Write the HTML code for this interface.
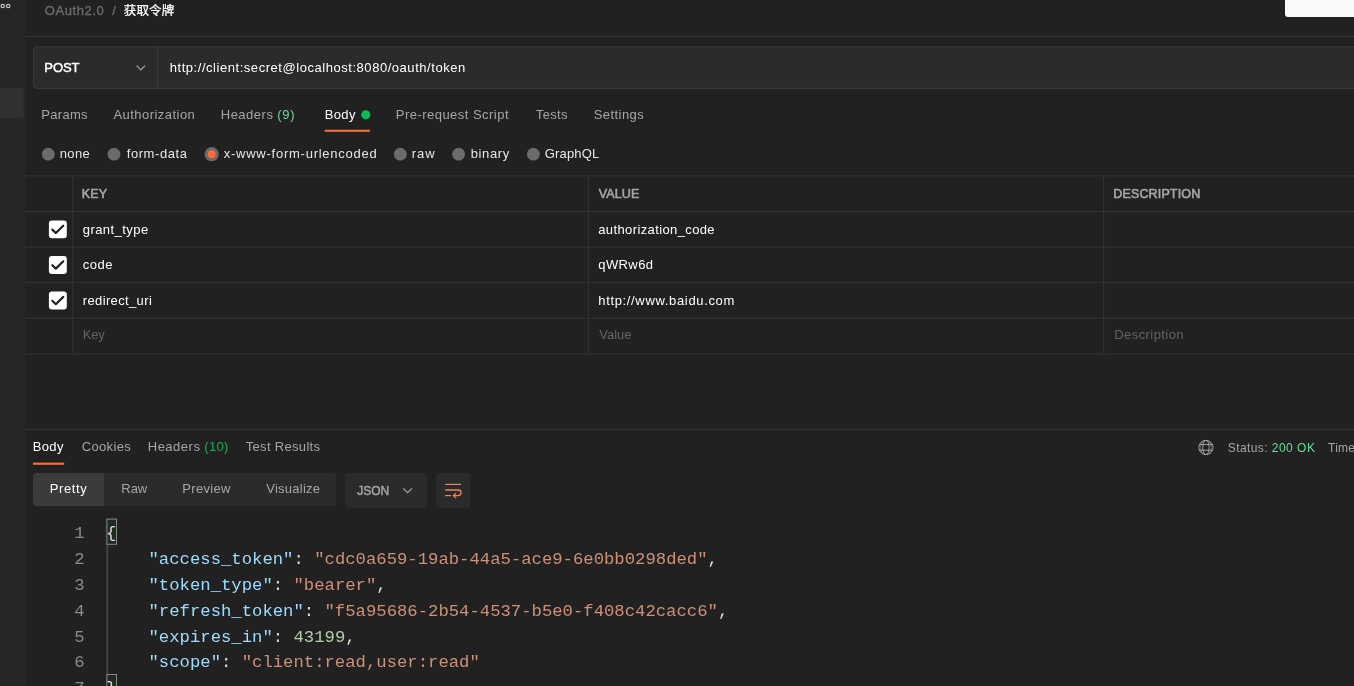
<!DOCTYPE html>
<html lang="zh"><head><meta charset="utf-8"><title>Postman - OAuth2.0</title><style>
*{margin:0;padding:0;box-sizing:border-box}
html,body{width:1354px;height:686px;overflow:hidden;background:#212121}
body{position:relative;font-family:"Liberation Sans", "Noto Sans CJK SC", sans-serif}
#app{position:absolute;left:0;top:0;width:1354px;height:686px;overflow:hidden;will-change:transform}
#bg{position:absolute;left:0;top:0}
.t{position:absolute;white-space:nowrap;height:20px;line-height:20px}
.code{position:absolute;white-space:pre;font-family:"Liberation Mono", monospace;font-size:17.25px;height:26px;line-height:26px}
.ln{position:absolute;width:40px;text-align:right;font-family:"Liberation Mono", monospace;font-size:17.25px;height:26px;line-height:26px;color:#8c8c84}
.k{color:#9cdcfe}.s{color:#ce9178}.n{color:#b5cea8}.p{color:#dcdcdc}
</style></head><body>
<div id="app">
<svg id="bg" width="1354" height="686" viewBox="0 0 1354 686"><rect x="0" y="0" width="23.4" height="686" fill="#262626"/>
<rect x="0" y="87.9" width="23.4" height="30" fill="#313131"/>
<rect x="23.4" y="0" width="1" height="686" fill="#303030"/>
<g fill="none" stroke="#c4c4c4" stroke-width="1.2"><circle cx="2.75" cy="6" r="1.7"/><circle cx="8.2" cy="6" r="1.7"/></g>
<path d="M1285 0 H1360 V17 H1288 a3 3 0 0 1 -3 -3 Z" fill="#f9f9f9"/>
<rect x="24.4" y="35.9" width="1330" height="1" fill="#333333"/>
<rect x="24.4" y="175.4" width="1330" height="1" fill="#333333"/>
<rect x="24.4" y="211.0" width="1330" height="1" fill="#333333"/>
<rect x="24.4" y="246.6" width="1330" height="1" fill="#333333"/>
<rect x="24.4" y="282.2" width="1330" height="1" fill="#333333"/>
<rect x="24.4" y="317.8" width="1330" height="1" fill="#333333"/>
<rect x="24.4" y="353.4" width="1330" height="1" fill="#333333"/>
<rect x="72.2" y="176.4" width="1" height="177" fill="#333333"/>
<rect x="587.9" y="176.4" width="1" height="177" fill="#333333"/>
<rect x="1103.2" y="176.4" width="1" height="177" fill="#333333"/>
<rect x="24.4" y="428.9" width="1330" height="1" fill="#333333"/>
<rect x="33.6" y="46.7" width="1340" height="41.7" rx="3.5" fill="#2b2b2b" stroke="#3b3b3b" stroke-width="1"/>
<rect x="157" y="47.2" width="1" height="40.7" fill="#3b3b3b"/>
<path d="M136.7 65.6 L140.9 69.9 L145.1 65.6" fill="none" stroke="#a6a6a6" stroke-width="1.25"/>
<rect x="324.8" y="129.8" width="45.2" height="2" fill="#ff6c37"/>
<circle cx="365.8" cy="114.8" r="4.6" fill="#0cbb52"/>
<circle cx="48.3" cy="154.2" r="6.4" fill="#6b6b6b"/>
<circle cx="114.0" cy="154.2" r="6.4" fill="#6b6b6b"/>
<circle cx="400.3" cy="154.2" r="6.4" fill="#6b6b6b"/>
<circle cx="458.6" cy="154.2" r="6.4" fill="#6b6b6b"/>
<circle cx="533.4" cy="154.2" r="6.4" fill="#6b6b6b"/>
<circle cx="211.7" cy="154.2" r="7.1" fill="#6b6b6b"/><circle cx="211.7" cy="154.2" r="3.9" fill="#ff6c37"/>
<g transform="translate(48.9,220.4)"><rect width="17.9" height="17.9" rx="3" fill="#ffffff"/><path d="M3.4 9.2 L6.9 12.6 L14.4 5.3" fill="none" stroke="#212121" stroke-width="2.2" stroke-linecap="round" stroke-linejoin="round"/></g>
<g transform="translate(48.9,256.0)"><rect width="17.9" height="17.9" rx="3" fill="#ffffff"/><path d="M3.4 9.2 L6.9 12.6 L14.4 5.3" fill="none" stroke="#212121" stroke-width="2.2" stroke-linecap="round" stroke-linejoin="round"/></g>
<g transform="translate(48.9,291.6)"><rect width="17.9" height="17.9" rx="3" fill="#ffffff"/><path d="M3.4 9.2 L6.9 12.6 L14.4 5.3" fill="none" stroke="#212121" stroke-width="2.2" stroke-linecap="round" stroke-linejoin="round"/></g>
<rect x="33" y="462.6" width="31.2" height="2.2" fill="#ff6c37"/>
<rect x="33" y="473" width="303.3" height="32.9" fill="#2b2b2b" rx="4"/>
<path d="M37 473 H104 V505.9 H37 a4 4 0 0 1 -4 -4 V477 a4 4 0 0 1 4 -4 Z" fill="#3b3b3b"/>
<rect x="345" y="473" width="82" height="34.8" fill="#2b2b2b" rx="4"/>
<rect x="436" y="473" width="34.4" height="34.8" fill="#2b2b2b" rx="4"/>
<path d="M403.3 488.4 L407.6 492.7 L411.9 488.4" fill="none" stroke="#a6a6a6" stroke-width="1.25"/>
<g transform="translate(445,483)" fill="none" stroke="#e8875c" stroke-width="1.15"><path d="M0.2 1.4 H16"/><path d="M0.2 7 H13.2 a2.8 2.8 0 0 1 0 5.6 H8.4" stroke-width="1.3"/><path d="M0.2 12.6 H6.1"/><path d="M11 10.2 L8.3 12.6 L11 15"/></g>
<g transform="translate(1205.95,447.5)" fill="none" stroke="#a3a3a3" stroke-width="1"><circle r="7.15"/><ellipse rx="3.2" ry="7.15"/><ellipse rx="5.5" ry="7.15" stroke-width="0.45"/><path d="M-6.7 -2.9 H6.7 M-6.7 2.7 H6.7"/></g>
<rect x="106.4" y="545" width="1.7" height="141" fill="#474743"/>
<rect x="106.9" y="519.1" width="9.6" height="25.2" fill="#1f2a20" stroke="#8a8a84" stroke-width="1"/>
<rect x="106.9" y="674.5" width="9.6" height="25.2" fill="#1f2a20" stroke="#8a8a84" stroke-width="1"/></svg>
<div class="ln" style="left:44.5px;top:521.02px">1</div>
<div class="code" style="left:107.1px;top:521.02px"><span class="p" style="margin-left:-1.2px">{</span></div>
<div class="ln" style="left:44.5px;top:546.9px">2</div>
<div class="code" style="left:107.1px;top:546.9px">    <span class="k">"access_token"</span><span class="p">: </span><span class="s">"cdc0a659-19ab-44a5-ace9-6e0bb0298ded"</span><span class="p">,</span></div>
<div class="ln" style="left:44.5px;top:572.78px">3</div>
<div class="code" style="left:107.1px;top:572.78px">    <span class="k">"token_type"</span><span class="p">: </span><span class="s">"bearer"</span><span class="p">,</span></div>
<div class="ln" style="left:44.5px;top:598.66px">4</div>
<div class="code" style="left:107.1px;top:598.66px">    <span class="k">"refresh_token"</span><span class="p">: </span><span class="s">"f5a95686-2b54-4537-b5e0-f408c42cacc6"</span><span class="p">,</span></div>
<div class="ln" style="left:44.5px;top:624.54px">5</div>
<div class="code" style="left:107.1px;top:624.54px">    <span class="k">"expires_in"</span><span class="p">: </span><span class="n">43199</span><span class="p">,</span></div>
<div class="ln" style="left:44.5px;top:650.42px">6</div>
<div class="code" style="left:107.1px;top:650.42px">    <span class="k">"scope"</span><span class="p">: </span><span class="s">"client:read,user:read"</span></div>
<div class="ln" style="left:44.5px;top:676.3px">7</div>
<div class="code" style="left:107.1px;top:676.3px"><span class="p" style="margin-left:-1.2px">}</span></div>
<div class="t" style="left:44.75px;top:0.75px;font-size:13px;font-weight:400;letter-spacing:0.571px;color:#6b6b6b;-webkit-text-stroke:0.35px #6b6b6b;">OAuth2.0</div>
<div class="t" style="left:112.25px;top:0.75px;font-size:13px;font-weight:400;letter-spacing:-0.5px;color:#6b6b6b;-webkit-text-stroke:0.35px #6b6b6b;">/</div>
<div class="t" style="left:123.75px;top:0.75px;font-size:12.5px;font-weight:400;letter-spacing:0.167px;color:#ffffff;-webkit-text-stroke:0.25px #ffffff;">获取令牌</div>
<div class="t" style="left:44.35px;top:58.3px;font-size:13px;font-weight:400;letter-spacing:-0.1px;color:#ffffff;-webkit-text-stroke:0.45px #ffffff;">POST</div>
<div class="t" style="left:169.75px;top:57.5px;font-size:13px;font-weight:400;letter-spacing:0.543px;color:#ffffff;">http://client:secret@localhost:8080/oauth/token</div>
<div class="t" style="left:41.25px;top:105px;font-size:13px;font-weight:400;letter-spacing:0.3px;color:#a6a6a6;">Params</div>
<div class="t" style="left:113.45px;top:105px;font-size:13px;font-weight:400;letter-spacing:0.458px;color:#a6a6a6;">Authorization</div>
<div class="t" style="left:220.75px;top:105px;font-size:13px;font-weight:400;letter-spacing:0.5px;color:#a6a6a6;">Headers</div>
<div class="t" style="left:277.25px;top:105px;font-size:13px;font-weight:400;letter-spacing:0.75px;color:#6bdd9a;">(9)</div>
<div class="t" style="left:324.75px;top:105px;font-size:13px;font-weight:400;letter-spacing:0.333px;color:#ffffff;">Body</div>
<div class="t" style="left:395.75px;top:105px;font-size:13px;font-weight:400;letter-spacing:0.471px;color:#a6a6a6;">Pre-request Script</div>
<div class="t" style="left:535.75px;top:105px;font-size:13px;font-weight:400;letter-spacing:0.375px;color:#a6a6a6;">Tests</div>
<div class="t" style="left:593.75px;top:105px;font-size:13px;font-weight:400;letter-spacing:0.429px;color:#a6a6a6;">Settings</div>
<div class="t" style="left:59.75px;top:144px;font-size:13px;font-weight:400;letter-spacing:0.333px;color:#e6e6e6;">none</div>
<div class="t" style="left:126.75px;top:144px;font-size:13px;font-weight:400;letter-spacing:0.562px;color:#e6e6e6;">form-data</div>
<div class="t" style="left:223.75px;top:144px;font-size:13px;font-weight:400;letter-spacing:0.75px;color:#e6e6e6;">x-www-form-urlencoded</div>
<div class="t" style="left:411.75px;top:144px;font-size:13px;font-weight:400;letter-spacing:1.0px;color:#e6e6e6;">raw</div>
<div class="t" style="left:470.75px;top:144px;font-size:13px;font-weight:400;letter-spacing:0.6px;color:#e6e6e6;">binary</div>
<div class="t" style="left:544.75px;top:144px;font-size:13px;font-weight:400;letter-spacing:0.167px;color:#e6e6e6;">GraphQL</div>
<div class="t" style="left:81.75px;top:184.3px;font-size:12.5px;font-weight:400;letter-spacing:0.15px;color:#a6a6a6;-webkit-text-stroke:0.6px #a6a6a6;">KEY</div>
<div class="t" style="left:598.75px;top:184.3px;font-size:12.5px;font-weight:400;letter-spacing:0.125px;color:#a6a6a6;-webkit-text-stroke:0.6px #a6a6a6;">VALUE</div>
<div class="t" style="left:1113.25px;top:184.3px;font-size:12.5px;font-weight:400;letter-spacing:0.15px;color:#a6a6a6;-webkit-text-stroke:0.6px #a6a6a6;">DESCRIPTION</div>
<div class="t" style="left:82.75px;top:219.5px;font-size:13px;font-weight:400;letter-spacing:0.444px;color:#ffffff;">grant_type</div>
<div class="t" style="left:598.25px;top:219.5px;font-size:13px;font-weight:400;letter-spacing:0.382px;color:#ffffff;">authorization_code</div>
<div class="t" style="left:82.75px;top:255px;font-size:13px;font-weight:400;letter-spacing:0.5px;color:#ffffff;">code</div>
<div class="t" style="left:598.25px;top:255px;font-size:13px;font-weight:400;letter-spacing:0.4px;color:#ffffff;">qWRw6d</div>
<div class="t" style="left:82.75px;top:290.5px;font-size:13px;font-weight:400;letter-spacing:0.364px;color:#ffffff;">redirect_uri</div>
<div class="t" style="left:598.25px;top:290.5px;font-size:13px;font-weight:400;letter-spacing:0.658px;color:#ffffff;">http://www.baidu.com</div>
<div class="t" style="left:82.75px;top:325px;font-size:13px;font-weight:400;letter-spacing:-0.25px;color:#646464;">Key</div>
<div class="t" style="left:599.25px;top:325px;font-size:13px;font-weight:400;letter-spacing:0.0px;color:#646464;">Value</div>
<div class="t" style="left:1114.25px;top:325px;font-size:13px;font-weight:400;letter-spacing:0.43px;color:#646464;">Description</div>
<div class="t" style="left:32.75px;top:437.35px;font-size:13px;font-weight:400;letter-spacing:0.333px;color:#ffffff;">Body</div>
<div class="t" style="left:81.75px;top:437.35px;font-size:13px;font-weight:400;letter-spacing:0.333px;color:#a6a6a6;">Cookies</div>
<div class="t" style="left:147.75px;top:437.35px;font-size:13px;font-weight:400;letter-spacing:0.5px;color:#a6a6a6;">Headers</div>
<div class="t" style="left:204.25px;top:437.35px;font-size:13px;font-weight:400;letter-spacing:0.333px;color:#17b057;">(10)</div>
<div class="t" style="left:245.75px;top:437.35px;font-size:13px;font-weight:400;letter-spacing:0.318px;color:#a6a6a6;">Test Results</div>
<div class="t" style="left:1227.75px;top:437.5px;font-size:12px;font-weight:400;letter-spacing:0.417px;color:#a6a6a6;">Status:</div>
<div class="t" style="left:1271.75px;top:437.5px;font-size:12px;font-weight:400;letter-spacing:0.5px;color:#6bdd9a;">200 OK</div>
<div class="t" style="left:1328.05px;top:437.5px;font-size:12px;font-weight:400;letter-spacing:0.233px;color:#a6a6a6;">Time</div>
<div class="t" style="left:49.75px;top:479.4px;font-size:13px;font-weight:400;letter-spacing:0.6px;color:#ffffff;">Pretty</div>
<div class="t" style="left:121.25px;top:479.4px;font-size:13px;font-weight:400;letter-spacing:0.0px;color:#a6a6a6;">Raw</div>
<div class="t" style="left:182.25px;top:479.4px;font-size:13px;font-weight:400;letter-spacing:0.333px;color:#a6a6a6;">Preview</div>
<div class="t" style="left:266.25px;top:479.4px;font-size:13px;font-weight:400;letter-spacing:0.25px;color:#a6a6a6;">Visualize</div>
<div class="t" style="left:357.25px;top:480.7px;font-size:12px;font-weight:400;letter-spacing:0.0px;color:#a6a6a6;-webkit-text-stroke:0.45px #a6a6a6;">JSON</div>
</div>
</body></html>
